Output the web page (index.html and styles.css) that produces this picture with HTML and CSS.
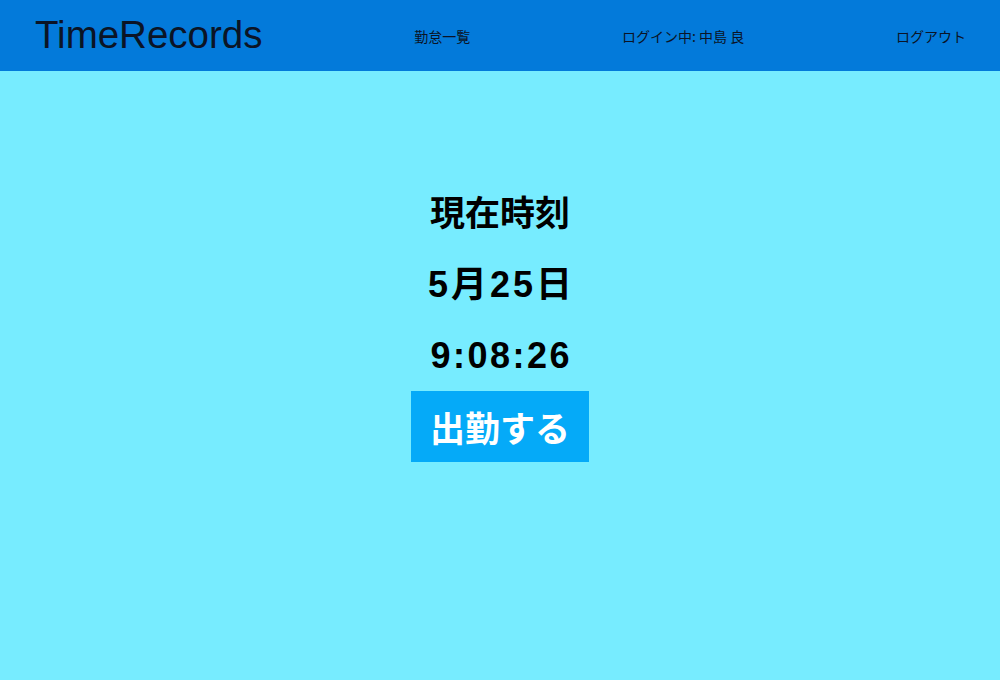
FILE: index.html
```html
<!DOCTYPE html>
<html lang="ja">
<head>
<meta charset="utf-8">
<title>TimeRecords</title>
<link rel="stylesheet" href="styles.css">
</head>
<body>
<header class="site-header">
  <div class="logo">TimeRecords</div>
  <a class="nav-item" href="#">勤怠一覧</a>
  <span class="nav-item">ログイン中: 中島 良</span>
  <a class="nav-item" href="#">ログアウト</a>
</header>
<main class="clock">
  <div class="clock-line">現在時刻</div>
  <div class="clock-line date">5月25日</div>
  <div class="clock-line digits">9:08:26</div>
  <button class="punch-btn">出勤する</button>
</main>
</body>
</html>
```

FILE: styles.css
```css
html, body {
  margin: 0;
  padding: 0;
}
body {
  width: 1000px;
  height: 680px;
  background: #77ecff;
  font-family: "Liberation Sans", "Noto Sans CJK JP", sans-serif;
  color: #000;
  overflow: hidden;
}
.site-header {
  height: 71px;
  background: #037ada;
  display: flex;
  align-items: center;
  justify-content: space-between;
  padding: 0 34px 0 35px;
  box-sizing: border-box;
}
.logo {
  font-size: 38.5px;
  font-weight: 400;
  color: #0b1426;
  margin-top: -1px;
}
.nav-item {
  font-size: 14px;
  color: #0b1426;
  text-decoration: none;
  font-family: "Noto Sans CJK JP", sans-serif;
}
.clock {
  display: flex;
  flex-direction: column;
  align-items: center;
  padding-top: 107px;
}
.clock-line {
  font-size: 35px;
  font-weight: 700;
  line-height: 71px;
  height: 71px;
}
.date {
  font-size: 36px;
  letter-spacing: 3px;
  padding-left: 3px;
}
.digits {
  font-size: 36px;
  letter-spacing: 2.5px;
  padding-left: 2.5px;
}
.punch-btn {
  font-family: "Noto Sans CJK JP", sans-serif;
  font-size: 35px;
  font-weight: 700;
  color: #fff;
  background: #05aaf8;
  border: none;
  height: 71px;
  line-height: 71px;
  padding: 0 19px;
  margin: 0;
}
```
